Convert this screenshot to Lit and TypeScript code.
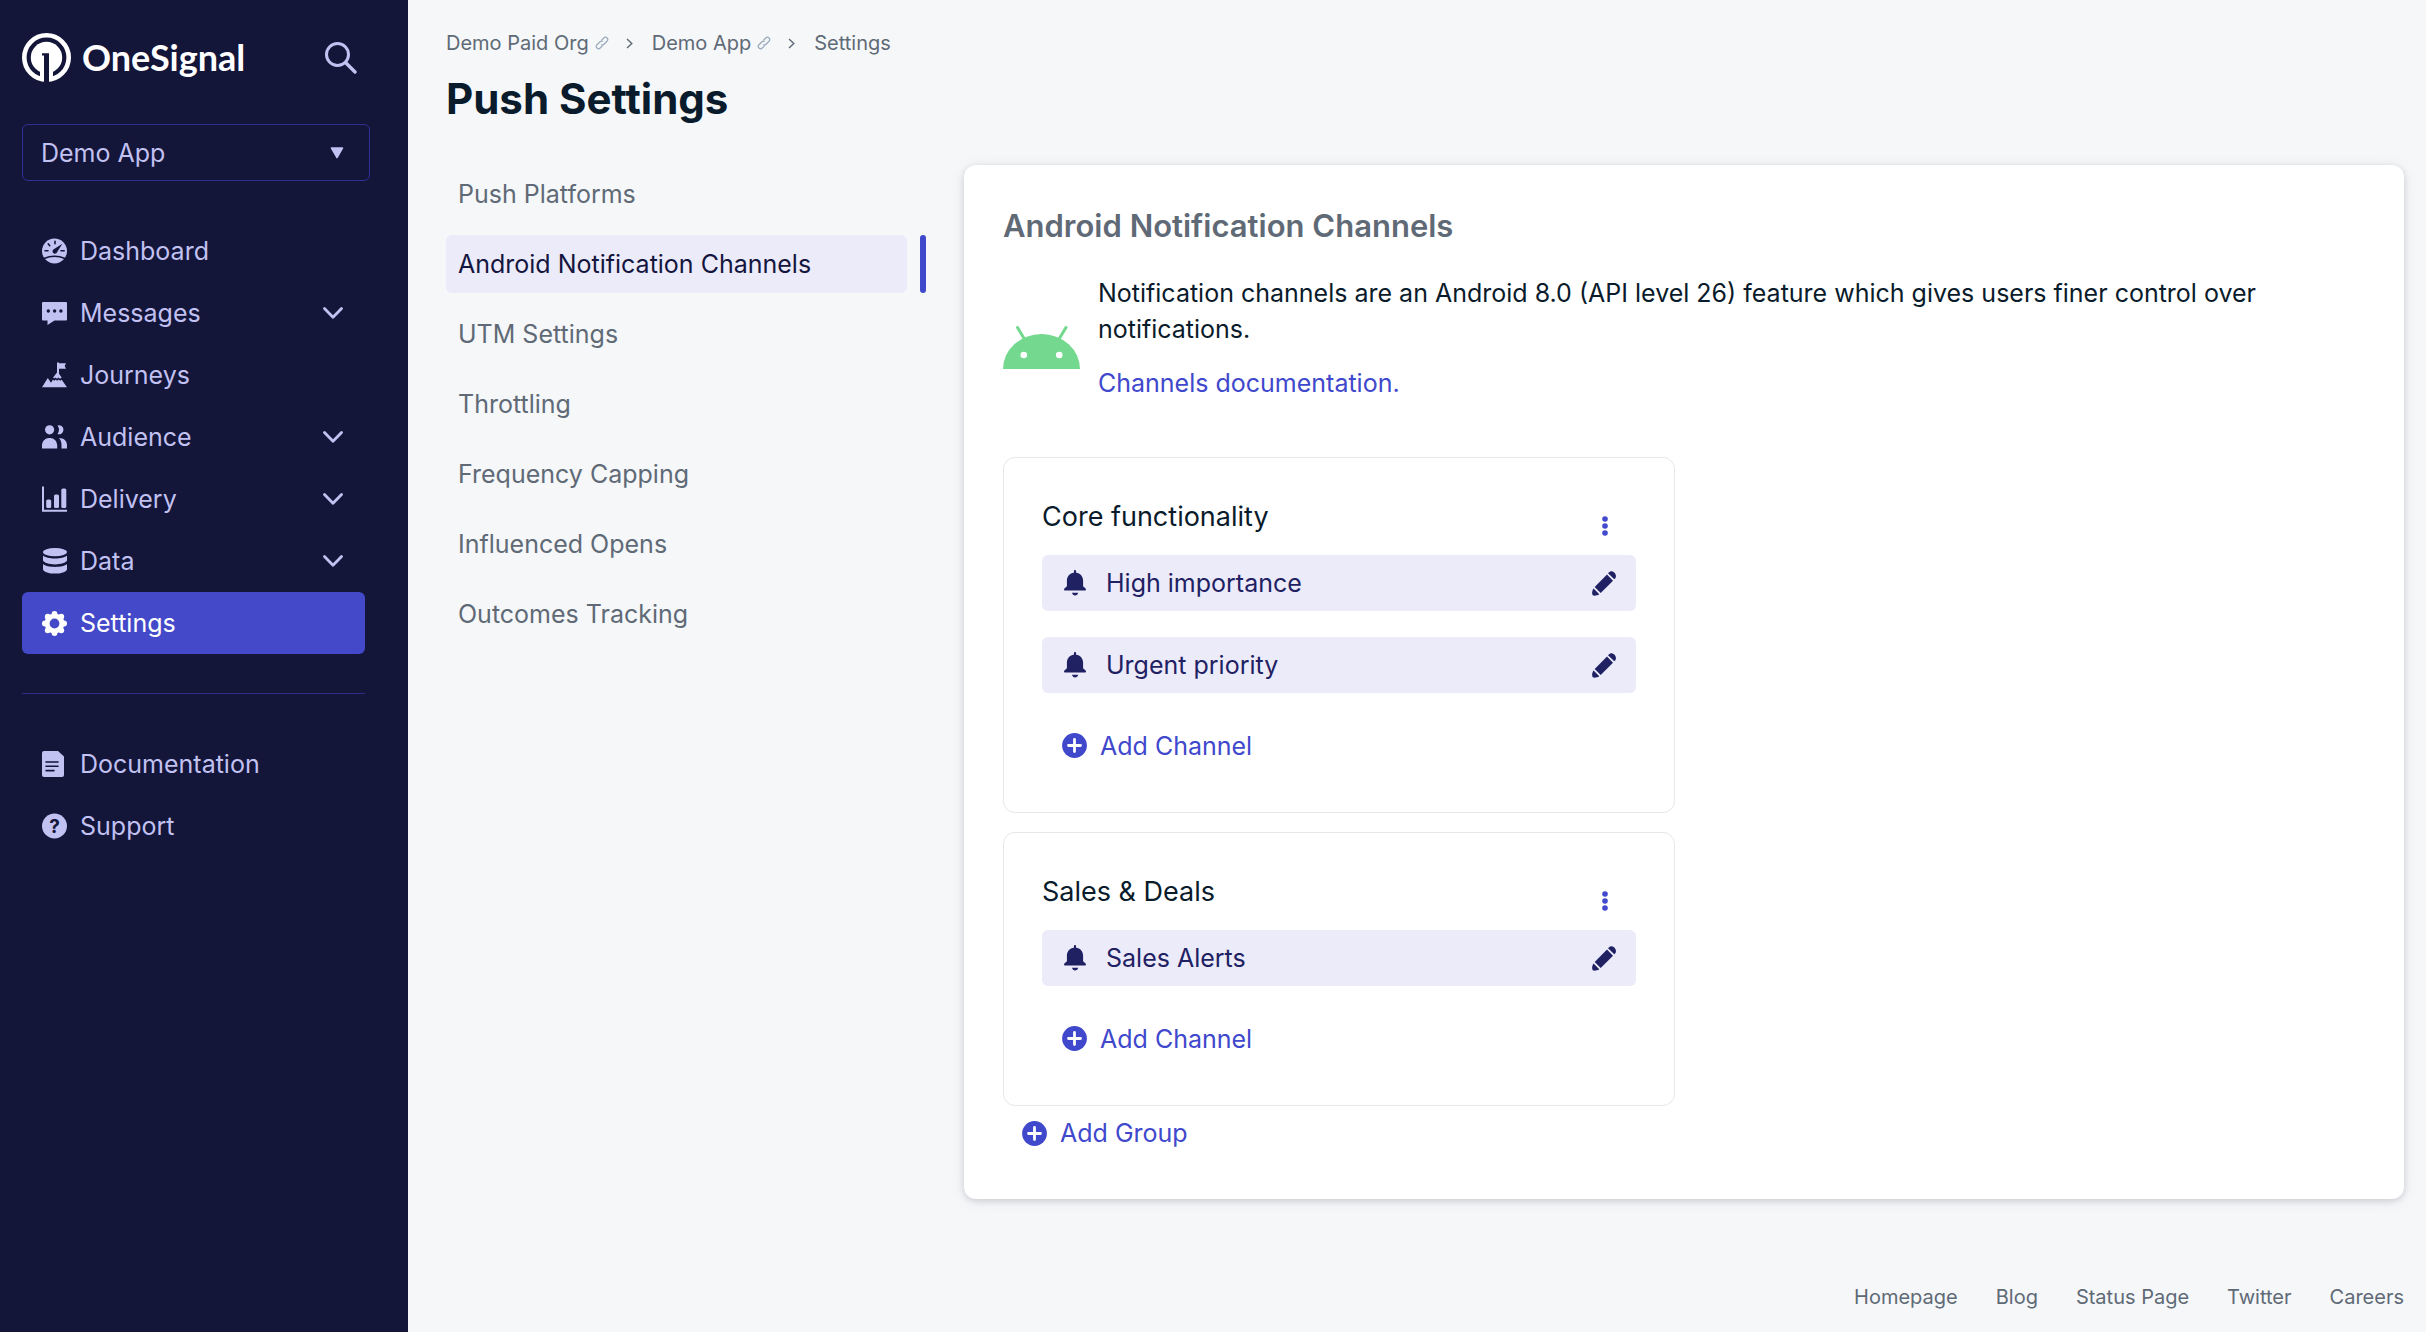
import { LitElement, html, css, svg, nothing } from "lit";
import { customElement } from "lit/decorators.js";
import { classMap } from "lit/directives/class-map.js";

const icon = (width: number, height: number, body: unknown) =>
  html`<svg width=${width} height=${height} viewBox="0 0 ${width} ${height}" aria-hidden="true">${body}</svg>`;

const gearTeeth = Array.from({ length: 8 }, (_, i) => {
  const a = (i * Math.PI) / 4;
  return svg`<circle cx=${12.5 + 9.6 * Math.cos(a)} cy=${12.5 + 9.6 * Math.sin(a)} r="2.9" fill="currentColor"/>`;
});

const icons = {
  dashboard: icon(25, 26, svg`
    <circle cx="12.5" cy="13" r="12.5" fill="currentColor"/>
    <path d="M13 3.2v2.6M6.3 5.9l1.5 1.8M3 12.8h3M19 12.8h3.2" class="cut" stroke-width="1.6"/>
    <path d="M20.4 5.8l-5.4 8.4a2.3 2.3 0 1 1-3.6-2.6z" class="hole"/>
    <path d="M2 20.6Q12.5 16 23 20.6" class="cut" stroke-width="1.6"/>`),
  messages: icon(25, 26, svg`
    <path d="M1 2h23a1 1 0 0 1 1 1v16.500a1 1 0 0 1-1 1H12.500L5.500 25v-4.500H1a1 1 0 0 1-1-1V3a1 1 0 0 1 1-1z" fill="currentColor"/>
    <circle cx="6.300" cy="11" r="1.700" class="hole"/><circle cx="12.600" cy="11" r="1.700" class="hole"/><circle cx="18.900" cy="11" r="1.700" class="hole"/>`),
  journeys: icon(25, 26, svg`
    <path d="M15 .5h2v.8h7l-1.300 2.700 1.300 2.700h-7v5l2.700 3.700-1.700 1.300-1.600-1.200-1.500 1.200-1.500-1.200-1.300 1.100-1-1 3.900-5z" fill="currentColor"/>
    <path d="M0 25.200l5.800-9.200 3.200 4.800 1.800-3 1.500.9 1.300-1.100 1.500 1.200 1.500-1.200 1.500 1.100 1.600-.9L25 25.200z" fill="currentColor"/>`),
  audience: icon(25, 26, svg`
    <circle cx="7.600" cy="5.800" r="4.600" fill="currentColor"/>
    <path d="M0 24.500v-3.200A7 7 0 0 1 7 14h1.200a7 7 0 0 1 7 7.300v3.200z" fill="currentColor"/>
    <path d="M15.500 1.500A4.500 4.500 0 1 1 15.500 10a7.500 7.500 0 0 0 0-8.500z" fill="currentColor"/>
    <path d="M17 14c4.800 0 8 2.800 8 7.300v3.200h-5.500V21c0-3-.8-5.200-2.500-7z" fill="currentColor"/>`),
  delivery: icon(25, 26, svg`
    <path d="M1 .5v24.200h24" fill="none" stroke="currentColor" stroke-width="2"/>
    <rect x="4.200" y="13.500" width="5" height="8.500" rx="1.500" fill="currentColor"/>
    <rect x="12" y="8.500" width="5" height="13.500" rx="1.500" fill="currentColor"/>
    <rect x="19.300" y="2.500" width="5" height="19.500" rx="1.500" fill="currentColor"/>`),
  data: icon(25, 26, svg`
    <ellipse cx="13" cy="4.200" rx="12" ry="4.100" fill="currentColor"/>
    <path d="M1 7.400c2 2 6.500 3 12 3s10-1 12-3v5.200c-1 2.400-6 3.800-12 3.800S2 15 1 12.600z" fill="currentColor"/>
    <path d="M1 16.100c2 2 6.500 2.900 12 2.900s10-.9 12-2.900v5.300c-1 2.700-6 4.200-12 4.200s-11-1.500-12-4.200z" fill="currentColor"/>`),
  settings: icon(25, 25, svg`
    ${gearTeeth}<circle cx="12.500" cy="12.500" r="7.400" fill="none" stroke="currentColor" stroke-width="5"/>`),
  document: icon(25, 26, svg`
    <path d="M2 0h14l6 5.500V24a2 2 0 0 1-2 2H2a2 2 0 0 1-2-2V2a2 2 0 0 1 2-2z" fill="currentColor"/>
    <path d="M4 11h12M4 15.300h12M4 19.600h8" class="cut" stroke-width="1.600"/>`),
  support: icon(25, 26, svg`
    <circle cx="12.500" cy="13" r="12.500" fill="currentColor"/>
    <text x="12.500" y="19.500" text-anchor="middle" class="mark">?</text>`),
};

const chevronDown = icon(20, 12, svg`<path d="M1.500 1.500L10 10.200l8.500-8.700" fill="none" stroke="currentColor" stroke-width="2.800" stroke-linecap="round" stroke-linejoin="round"/>`);
const chevronRight = icon(7, 11, svg`<path d="M1 1l4.800 4.500L1 10" fill="none" stroke="currentColor" stroke-width="1.400"/>`);
const linkGlyph = icon(14, 14, svg`
  <g transform="rotate(-45 7 7)" fill="none" stroke="#9aa9ba" stroke-width="1.200">
    <path d="M5.500 9.300H2.200a2.300 2.300 0 0 1 0-4.600h4.300a2.300 2.300 0 0 1 2.200 1.700"/>
    <path d="M8.500 4.700h3.300a2.300 2.300 0 0 1 0 4.600H7.500a2.300 2.300 0 0 1-2.200-1.700"/>
  </g>`);
const searchGlyph = icon(32, 32, svg`<circle cx="12.500" cy="12.500" r="11" fill="none" stroke="currentColor" stroke-width="3"/><path d="M20.500 20.500l9.500 9.500" stroke="currentColor" stroke-width="3.400" stroke-linecap="round"/>`);
const bell = icon(22, 26, svg`
  <path d="M9.900 1.200a1.100 1.100 0 0 1 2.200 0v1.500c4.100.5 7 3.700 7 8v5.500l2.500 2.400c.7.800.3 1.900-.7 1.900H1.100c-1 0-1.400-1.100-.7-1.900l2.500-2.400v-5.500c0-4.300 2.900-7.500 7-8z" fill="currentColor"/>
  <path d="M8 22.800h6.200c-.3 1.600-1.500 2.700-3.100 2.700S8.300 24.400 8 22.800z" fill="currentColor"/>`);
const pencil = icon(24, 25, svg`
  <path d="M16.800 1.400c1.900-1.900 4-1.300 5.500.2s2.400 3.900.8 5.800l-.8.900-6.300-6.100z" fill="currentColor"/>
  <path d="M15 3.500l6 6.200L8.700 22l-6-6.100z" fill="currentColor"/>
  <path d="M1.600 17.400l5.700 5.900c-2 1.300-4.300 1.700-6 1.300-1.600-1.200-1.600-4.600.3-7.200z" fill="currentColor"/>`);
const plusCircle = icon(25, 25, svg`<circle cx="12.500" cy="12.500" r="12.400" fill="currentColor"/><path d="M12.500 6.500v12M6.500 12.500h12" stroke="#fff" stroke-width="2.800" stroke-linecap="round"/>`);
const dots = icon(6, 20, svg`<circle cx="3" cy="3" r="2.800" fill="currentColor"/><circle cx="3" cy="10" r="2.800" fill="currentColor"/><circle cx="3" cy="17" r="2.800" fill="currentColor"/>`);

type NavEntry = { label: string; glyph: unknown; expandable?: boolean; active?: boolean };

const primaryNav: NavEntry[] = [
  { label: "Dashboard", glyph: icons.dashboard },
  { label: "Messages", glyph: icons.messages, expandable: true },
  { label: "Journeys", glyph: icons.journeys },
  { label: "Audience", glyph: icons.audience, expandable: true },
  { label: "Delivery", glyph: icons.delivery, expandable: true },
  { label: "Data", glyph: icons.data, expandable: true },
  { label: "Settings", glyph: icons.settings, active: true },
];

const helpNav: NavEntry[] = [
  { label: "Documentation", glyph: icons.document },
  { label: "Support", glyph: icons.support },
];

const sections = [
  "Push Platforms",
  "Android Notification Channels",
  "UTM Settings",
  "Throttling",
  "Frequency Capping",
  "Influenced Opens",
  "Outcomes Tracking",
];

const groups = [
  { name: "Core functionality", channels: ["High importance", "Urgent priority"] },
  { name: "Sales & Deals", channels: ["Sales Alerts"] },
];

const footerLinks = ["Homepage", "Blog", "Status Page", "Twitter", "Careers"];

const base = css`
  * { box-sizing: border-box; }
  svg { display: block; flex: none; }
  a { color: inherit; text-decoration: none; }
  button, select { font: inherit; color: inherit; background: none; border: 0; padding: 0; margin: 0; cursor: pointer; text-align: left; }
  ul, ol { list-style: none; margin: 0; padding: 0; }
  h1, h2, h3, p { margin: 0; }
`;

@customElement("app-sidebar")
class AppSidebar extends LitElement {
  static styles = [base, css`
    :host { display: block; background: #131539; color: #c1c1f2; padding: 33px 38px 33px 22px; }
    .top { display: flex; align-items: center; justify-content: space-between; padding-right: 13px; margin-bottom: 42px; }
    .brand { display: flex; align-items: center; gap: 11px; color: #fff; font: 700 36px/49px Lato, sans-serif; }
    .picker { position: relative; display: block; margin-bottom: 39px; }
    .picker select { appearance: none; width: 100%; height: 57px; border: 1px solid #2f2f95; border-radius: 6px; padding: 0 18px; }
    .picker svg { position: absolute; right: 26px; top: 23px; pointer-events: none; }
    .nav { margin-right: 5px; }
    .row { display: flex; align-items: center; gap: 13px; width: 100%; height: 62px; padding: 0 22px 0 20px; border-radius: 6px; }
    .row .label { flex: 1; }
    .active { background: #4349c8; color: #fff; }
    .help { margin-top: 39px; border-top: 1px solid #2d2d87; padding-top: 39px; }
    .cut { stroke: #131539; fill: none; stroke-linecap: round; }
    .hole { fill: #131539; }
    .mark { fill: #131539; font: 700 19px Inter, sans-serif; }
  `];

  private entry(e: NavEntry) {
    const cls = classMap({ row: true, active: !!e.active });
    const inner = html`${e.glyph}<span class="label">${e.label}</span>${e.expandable ? chevronDown : nothing}`;
    return html`<li>${e.expandable
      ? html`<button type="button" class=${cls} aria-expanded="false">${inner}</button>`
      : html`<a href="#" class=${cls}>${inner}</a>`}</li>`;
  }

  render() {
    return html`
      <div class="top">
        <a href="#" class="brand">
          ${icon(49, 49, svg`
            <circle cx="24.500" cy="24.500" r="22.200" fill="none" stroke="#fff" stroke-width="4.600"/>
            <circle cx="24.500" cy="24.500" r="15.700" fill="#fff"/>
            <path d="M18 36h13v11.500H18z" fill="#fff"/>
            <path d="M20 20.300h7V49h-5V22.500h-2z" class="hole"/>`)}
          <span>OneSignal</span>
        </a>
        <button type="button" aria-label="Search">${searchGlyph}</button>
      </div>
      <label class="picker">
        <select aria-label="App"><option>Demo App</option></select>
        ${icon(14, 12, svg`<path d="M1.500 1h11L7 10.500z" fill="currentColor" stroke="currentColor" stroke-width="1.500" stroke-linejoin="round"/>`)}
      </label>
      <nav class="nav" aria-label="Primary">
        <ul>${primaryNav.map((e) => this.entry(e))}</ul>
        <ul class="help">${helpNav.map((e) => this.entry(e))}</ul>
      </nav>`;
  }
}

@customElement("channel-group")
class ChannelGroup extends LitElement {
  static properties = { name: {}, channels: { attribute: false } };
  declare name: string;
  declare channels: string[];

  static styles = [base, css`
    :host { display: block; background: #fff; border: 1px solid #e6e7ea; border-radius: 12px; padding: 38px; }
    .head { display: flex; justify-content: space-between; min-height: 59px; }
    .title { font-size: 27px; font-weight: 400; line-height: 42px; }
    .more { display: flex; align-items: center; justify-content: center; width: 62px; color: #4349cc; }
    .list { display: grid; gap: 26px; margin-bottom: 24px; }
    .channel { display: flex; align-items: center; height: 56px; gap: 20px; padding: 0 20px 0 22px; background: #ecebfa; border-radius: 6px; color: #1f2163; }
    .channel .label { flex: 1; }
    .add { display: flex; align-items: center; gap: 13px; height: 57px; padding: 0 20px; color: #4048cc; }
  `];

  render() {
    return html`
      <div class="head">
        <h3 class="title">${this.name}</h3>
        <button type="button" class="more" aria-label="Group options">${dots}</button>
      </div>
      <ul class="list">
        ${this.channels.map((c) => html`<li class="channel">${bell}<span class="label">${c}</span><button type="button" aria-label="Edit ${c}">${pencil}</button></li>`)}
      </ul>
      <button type="button" class="add">${plusCircle}Add Channel</button>`;
  }
}

@customElement("app-root")
class AppRoot extends LitElement {
  static styles = [base, css`
    :host { display: grid; grid-template-columns: 408px minmax(0, 1fr); min-height: 100vh; background: #f5f7f9; color: #0a1b2b; font: 400 25px/36px Inter, "Liberation Sans", sans-serif; }
    .main { display: flex; flex-direction: column; padding: 28px 22px 20px 38px; }
    .crumbs { display: flex; align-items: center; font-size: 20px; line-height: 30px; color: #5f6a76; }
    .crumbs li { display: flex; align-items: center; }
    .crumbs a { display: flex; align-items: center; gap: 6px; }
    .sep { display: flex; margin: 0 19px 0 17px; }
    .heading { margin-top: 15px; font-size: 42px; line-height: 52px; font-weight: 700; }
    .body { display: flex; align-items: flex-start; gap: 38px; margin-top: 40px; }
    .side { flex: 0 0 480px; }
    .sections { display: grid; gap: 12px; color: #5f6a76; }
    .sections li { display: flex; gap: 13px; }
    .sections a { flex: 1; line-height: 58px; padding: 0 12px; border-radius: 6px; }
    .current a { background: #ecebfa; color: #15163e; }
    .sections li::after { content: ""; width: 6px; border-radius: 3px; }
    .sections .current::after { background: #4049cc; }
    .card { flex: 1; min-width: 0; padding: 39px; background: #fff; border-radius: 12px; box-shadow: 0 2px 6px rgba(20, 24, 36, .14), 0 2px 16px rgba(20, 24, 36, .07); }
    .title { font-size: 31px; line-height: 44px; font-weight: 600; color: #5f6a76; }
    .intro { display: flex; align-items: center; gap: 18px; margin: 27px 0 37px; }
    .text { display: grid; gap: 18px; padding-bottom: 19px; }
    .link, .add { color: #4048cc; }
    .groups { display: grid; gap: 19px; max-width: 672px; }
    .add { display: flex; align-items: center; gap: 13px; height: 54px; padding: 0 19px; }
    .footer { display: flex; justify-content: flex-end; gap: 38px; margin-top: auto; font-size: 20px; line-height: 30px; color: #5f6a76; }
  `];

  render() {
    return html`
      <app-sidebar></app-sidebar>
      <main class="main">
        <nav aria-label="Breadcrumb">
          <ol class="crumbs">
            <li><a href="#">Demo Paid Org ${linkGlyph}</a><span class="sep">${chevronRight}</span></li>
            <li><a href="#">Demo App ${linkGlyph}</a><span class="sep">${chevronRight}</span></li>
            <li>Settings</li>
          </ol>
        </nav>
        <h1 class="heading">Push Settings</h1>
        <div class="body">
          <nav class="side" aria-label="Push settings">
            <ul class="sections">
              ${sections.map((s, i) => html`<li class=${classMap({ current: i === 1 })}><a href="#">${s}</a></li>`)}
            </ul>
          </nav>
          <section class="card">
            <h2 class="title">Android Notification Channels</h2>
            <div class="intro">
              ${icon(77, 43, svg`
                <path d="M0 43a38.500 35 0 0 1 77 0z" fill="#74d98f"/>
                <path d="M14.500 1.500L22 14M63 1.500L55.500 14" stroke="#74d98f" stroke-width="3" stroke-linecap="round"/>
                <circle cx="20.800" cy="29" r="3.300" fill="#fff"/><circle cx="56.200" cy="29" r="3.300" fill="#fff"/>`)}
              <div class="text">
                <p>Notification channels are an Android 8.0 (API level 26) feature which gives users finer control over notifications.</p>
                <p><a href="#" class="link">Channels documentation.</a></p>
              </div>
            </div>
            <div class="groups">
              ${groups.map((g) => html`<channel-group .name=${g.name} .channels=${g.channels}></channel-group>`)}
            </div>
            <button type="button" class="add">${plusCircle}Add Group</button>
          </section>
        </div>
        <footer class="footer">${footerLinks.map((l) => html`<a href="#">${l}</a>`)}</footer>
      </main>`;
  }
}
